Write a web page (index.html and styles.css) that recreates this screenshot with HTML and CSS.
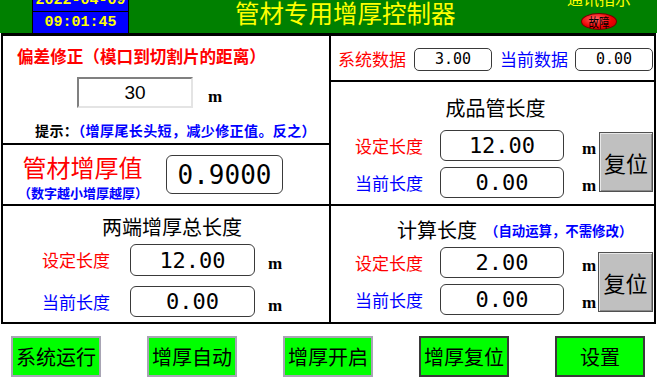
FILE: index.html
```html
<!DOCTYPE html>
<html lang="zh-CN">
<head>
<meta charset="utf-8">
<title>管材专用增厚控制器</title>
<link rel="stylesheet" href="styles.css">
</head>
<body>
<div class="screen">
  <header class="topbar">
    <div class="clock">
      <div class="clock-date">2022-04-09</div>
      <div class="clock-time">09:01:45</div>
    </div>
    <h1 class="title">管材专用增厚控制器</h1>
    <div class="comm">
      <div class="comm-label">通讯指示</div>
      <div class="comm-lamp"><span>故障</span></div>
    </div>
  </header>

  <main class="frame">
    <div class="top-row">
      <div class="col-left">
        <section class="sec-offset">
          <div class="offset-title">偏差修正（模口到切割片的距离）</div>
          <div class="offset-row">
            <div class="input-box">30</div>
            <span class="unit">m</span>
          </div>
          <div class="hint"><b class="hint-key">提示：</b><span class="hint-text">（增厚尾长头短，减少修正值。反之）</span></div>
        </section>
        <section class="sec-thick">
          <div class="thick-label">
            <div class="thick-title">管材增厚值</div>
            <div class="thick-sub">（数字越小增厚越厚）</div>
          </div>
          <div class="val val-lg">0.9000</div>
        </section>
      </div>
      <div class="col-right">
        <section class="sec-sys">
          <span class="lbl red">系统数据</span>
          <div class="val val-sm sys-box">3.00</div>
          <span class="lbl blue sys-gap">当前数据</span>
          <div class="val val-sm sys-box2">0.00</div>
        </section>
        <section class="sec-len">
          <div class="sec-title len-title">成品管长度</div>
          <div class="len-body">
            <div class="rows rows-right">
              <div class="row">
                <span class="lbl red lbl-r">设定长度</span>
                <div class="val val-md">12.00</div>
                <span class="unit unit-r">m</span>
              </div>
              <div class="row">
                <span class="lbl blue lbl-r">当前长度</span>
                <div class="val val-md">0.00</div>
                <span class="unit unit-r">m</span>
              </div>
            </div>
            <button class="reset reset-len">复位</button>
          </div>
        </section>
      </div>
    </div>
    <div class="bottom-row">
      <section class="sec-ends">
        <div class="sec-title ends-title">两端增厚总长度</div>
        <div class="rows rows-left">
          <div class="row row-a">
            <span class="lbl red lbl-l">设定长度</span>
            <div class="val val-md val-wide">12.00</div>
            <span class="unit unit-l">m</span>
          </div>
          <div class="row">
            <span class="lbl blue lbl-l">当前长度</span>
            <div class="val val-md val-wide">0.00</div>
            <span class="unit unit-l">m</span>
          </div>
        </div>
      </section>
      <section class="sec-calc">
        <div class="calc-head">
          <span class="sec-title">计算长度</span>
          <span class="calc-note">（自动运算，不需修改）</span>
        </div>
        <div class="len-body calc-body">
          <div class="rows rows-right">
            <div class="row">
              <span class="lbl red lbl-r">设定长度</span>
              <div class="val val-md">2.00</div>
              <span class="unit unit-r">m</span>
            </div>
            <div class="row">
              <span class="lbl blue lbl-r">当前长度</span>
              <div class="val val-md">0.00</div>
              <span class="unit unit-r">m</span>
            </div>
          </div>
          <button class="reset reset-calc">复位</button>
        </div>
      </section>
    </div>
  </main>

  <nav class="actions">
    <button class="act">系统运行</button>
    <button class="act">增厚自动</button>
    <button class="act">增厚开启</button>
    <button class="act act-dark">增厚复位</button>
    <button class="act act-dark">设置</button>
  </nav>
</div>
</body>
</html>
```

FILE: styles.css
```css
* { box-sizing: border-box; }
html, body { margin: 0; padding: 0; }
body {
  width: 657px;
  height: 384px;
  overflow: hidden;
  background: #fff;
  font-family: "Noto Sans CJK SC", sans-serif;
  color: #000;
}

/* ---------- header ---------- */
.topbar {
  height: 33px;
  background: #008000;
  display: flex;
  align-items: flex-start;
  overflow: hidden;
}
.clock {
  margin-left: 32px;
  margin-top: -9px;
  width: 97px;
  height: 42px;
  background: #0000ff;
  border-left: 1px solid #000;
  border-right: 1px solid #000;
  display: flex;
  flex-direction: column;
  font-family: "Liberation Mono", monospace;
  font-weight: bold;
  font-size: 15px;
  color: #ffff00;
  text-align: center;
}
.clock-date { height: 21px; line-height: 20px; border-bottom: 1px solid #000; }
.clock-time { flex: 1; line-height: 21px; }
.title {
  margin: 0 0 0 106px;
  font-size: 24.5px;
  line-height: 25px;
  font-weight: normal;
  color: #ffff00;
  white-space: nowrap;
}
.comm {
  margin-left: auto;
  margin-right: 22px;
  width: 72px;
  display: flex;
  flex-direction: column;
  align-items: center;
}
.comm-label {
  margin-top: -10px;
  font-size: 16px;
  line-height: 16px;
  color: #ffff00;
  white-space: nowrap;
}
.comm-lamp {
  margin-top: 7px;
  width: 36px;
  height: 17px;
  border-radius: 50%;
  background: radial-gradient(ellipse at 40% 35%, #ff6a6a 0%, #f00000 55%, #c00000 100%);
  border: 1px solid #700000;
  display: flex;
  align-items: center;
  justify-content: center;
}
.comm-lamp span {
  display: inline-block;
  font-size: 13px;
  line-height: 13px;
  transform: scaleX(0.8);
  color: #000;
  white-space: nowrap;
}

/* ---------- frame ---------- */
.frame {
  margin-left: 1px;
  width: 655px;
  height: 291px;
  border: 2px solid #000;
  border-top-width: 3px;
  display: flex;
  flex-direction: column;
}
.top-row { height: 170px; display: flex; border-bottom: 2px solid #000; }
.col-left { width: 328px; border-right: 2px solid #000; display: flex; flex-direction: column; }
.col-right { flex: 1; display: flex; flex-direction: column; }
.bottom-row { flex: 1; display: flex; }

.sec-offset { height: 109px; border-bottom: 2px solid #000; }
.sec-thick { flex: 1; display: flex; align-items: flex-start; padding-left: 15px; }
.sec-sys { height: 46px; border-bottom: 2px solid #000; display: flex; align-items: center; padding: 2px 0 0 7px; }
.sec-len { flex: 1; }
.sec-ends { width: 328px; border-right: 2px solid #000; }
.sec-calc { flex: 1; }

/* ---------- common ---------- */
.red { color: #ff0000; }
.blue { color: #0000ff; }
.lbl { font-size: 17px; line-height: 20px; white-space: nowrap; }
.unit {
  font-family: "Liberation Serif", serif;
  font-weight: bold;
  font-size: 17px;
  line-height: 16px;
}
.val {
  display: flex;
  align-items: center;
  justify-content: center;
  border: 1px solid #3a3a3a;
  border-radius: 6px;
  background: #fff;
  font-family: "DejaVu Sans Mono", monospace;
  color: #000;
  white-space: nowrap;
}
.val-sm { width: 78px; height: 23px; font-size: 15px; border-radius: 5px; }
.val-md { width: 124px; height: 31px; font-size: 22px; }
.val-wide { width: 125px; }
.val-lg { width: 117px; height: 39px; font-size: 26px; margin: 10px 0 0 19px; }
.sec-title { font-size: 20px; line-height: 24px; white-space: nowrap; }

/* ---------- offset section ---------- */
.offset-title {
  margin: 10px 0 0 14px;
  font-size: 16.6px;
  line-height: 20px;
  font-weight: bold;
  color: #ff0000;
  white-space: nowrap;
}
.offset-row { margin-top: 11px; padding-left: 74px; display: flex; align-items: center; }
.input-box {
  width: 116px;
  height: 31px;
  border: 2px solid;
  border-color: #808080 #e4e4e4 #e4e4e4 #808080;
  background: #fff;
  font-family: "Liberation Sans", sans-serif;
  font-size: 19px;
  display: flex;
  align-items: center;
  justify-content: center;
}
.offset-row .unit { margin-left: 15px; padding-top: 8px; }
.hint { margin-top: 14px; padding-left: 32px; font-size: 14px; line-height: 16px; white-space: nowrap; letter-spacing: 0.4px; }
.hint-key { font-weight: bold; }
.hint-text { color: #0000ff; font-weight: bold; }

/* ---------- thickness ---------- */
.thick-label { width: 129px; text-align: center; padding-top: 9px; white-space: nowrap; }
.thick-title { font-size: 24px; line-height: 26px; color: #ff0000; }
.thick-sub { margin-top: 5px; font-size: 13px; line-height: 16px; color: #0000ff; font-weight: bold; }

/* ---------- system row ---------- */
.sys-box { margin-left: 8px; }
.sys-gap { margin-left: 8px; }
.sys-box2 { margin-left: 7px; }

/* ---------- length sections ---------- */
.len-title { padding: 14px 0 0 6px; text-align: center; }
.len-body { display: flex; align-items: flex-start; margin-top: 10px; }
.rows { display: flex; flex-direction: column; }
.rows-right { gap: 6px; padding-left: 24px; }
.row { display: flex; align-items: center; height: 31px; }
.lbl-r { width: 85px; }
.unit-r { margin-left: 18px; width: 12px; padding-top: 6px; }
.reset {
  width: 54px;
  height: 60px;
  padding: 0;
  background: #c0c0c0;
  border: 1px solid #505050;
  box-shadow: inset 1px 1px 0 #e8e8e8, inset -1px -1px 0 #8a8a8a;
  font-family: "Noto Sans CJK SC", sans-serif;
  font-size: 22px;
  color: #000;
}
.reset-len { margin: 2px 0 0 5px; }

.ends-title { padding: 9px 0 0 12px; text-align: center; }
.rows-left { margin-top: 5px; padding-left: 39px; gap: 10px; }
.rows-left .row-a { height: 32px; }
.rows-left .row-a .val { height: 32px; }
.lbl-l { width: 88px; }
.unit-l { margin-left: 13px; padding-top: 8px; }

.calc-head { padding: 12px 0 0 66px; display: flex; align-items: center; white-space: nowrap; }
.calc-note { margin-left: 8px; font-size: 13.4px; line-height: 16px; color: #0000ff; font-weight: bold; }
.calc-body { margin-top: 5px; }
.reset-calc { width: 55px; margin: 5px 0 0 4px; }

/* ---------- bottom actions ---------- */
.actions { display: flex; gap: 46px; padding-left: 11px; margin-top: 12px; }
.act {
  width: 90px;
  height: 41px;
  padding: 0;
  background: #00ff00;
  border: 2px solid #a8a4b4;
  font-family: "Noto Sans CJK SC", sans-serif;
  font-size: 20px;
  color: #000;
}
.act-dark { border-color: #3a3a3a; }
```
